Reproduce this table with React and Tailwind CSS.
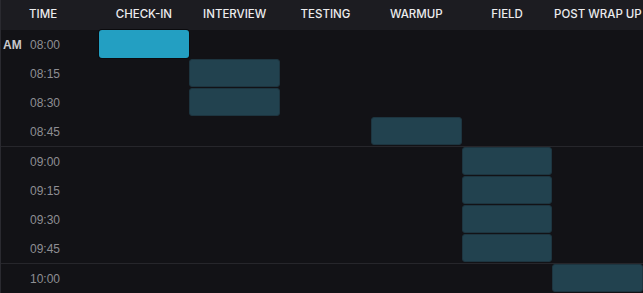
import React from "react";

const stations = ["Check-in", "Interview", "Testing", "Warmup", "Field", "Post Wrap Up"];

// hour groups -> rows; each row lists the station index that is booked (or -1)
const hours = [
  { label: "AM", rows: [["08:00", 0], ["08:15", 1], ["08:30", 1], ["08:45", 3]] },
  { label: "", rows: [["09:00", 4], ["09:15", 4], ["09:30", 4], ["09:45", 4]] },
  { label: "", rows: [["10:00", 5]] },
];

function Row({ time, ampm, slot }) {
  return (
    <div className="flex h-[29px]">
      <div className="w-[97.5px] shrink-0 flex items-center">
        <span className="w-[29px] pl-[2px] text-[12px] font-bold text-[#c9c9cc]">{ampm}</span>
        <span className="text-[12px] text-[#8e8e93]">{time}</span>
      </div>
      {stations.map((s, i) => (
        <div key={s} className="w-[90.8px] shrink-0 pb-px">
          {slot === i && (
            <div
              className={
                i === 0
                  ? "h-full rounded-[3px] bg-[#239fc2] shadow-[0_0_0_1px_#0b0b0e]"
                  : "h-full rounded-[3px] bg-[#22424f] border border-[#1d3540]"
              }
            />
          )}
        </div>
      ))}
    </div>
  );
}

export default function App() {
  return (
    <div
      className="w-[643px] h-[293px] overflow-hidden bg-[#121216] border-l border-[#2a2a30]"
      style={{ fontFamily: "'Liberation Sans', Arial, sans-serif" }}
    >
      <div
        className="flex h-[29px] items-center bg-[#1c1c21] text-[11.5px] font-medium uppercase text-[#ececee]"
        style={{ fontFamily: "Inter, 'Liberation Sans', sans-serif" }}
      >
        <div className="w-[97.5px] shrink-0 pl-[28px]">Time</div>
        {stations.map((s) => (
          <div key={s} className="w-[90.8px] shrink-0 text-center whitespace-nowrap">{s}</div>
        ))}
      </div>
      {hours.map((h, gi) => (
        <div key={gi} className={gi === 0 ? "border-t border-[#1c1c21]" : "border-t border-[#26262b]"}>
          {h.rows.map(([t, slot], ri) => (
            <Row key={t} time={t} ampm={ri === 0 ? h.label : ""} slot={slot} />
          ))}
        </div>
      ))}
    </div>
  );
}
